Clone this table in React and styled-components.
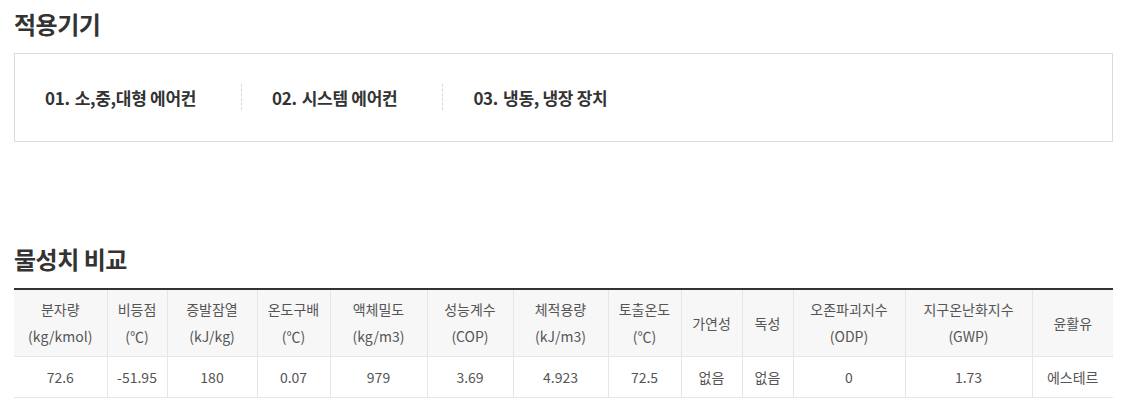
import React from 'react';
import styled, { createGlobalStyle } from 'styled-components';

const GlobalStyle = createGlobalStyle`
  html, body {
    margin: 0;
    padding: 0;
    background: #ffffff;
  }
  body {
    font-family: 'Noto Sans CJK KR', 'Noto Sans', sans-serif;
    color: #333;
  }
`;

const Page = styled.div`
  padding: 0 15px 0 14px;
`;

const Section = styled.section`
  margin-bottom: ${(props) => props.$gap || '0px'};
`;

const Title = styled.h2`
  margin: 0;
  padding-top: 7px;
  height: 46px;
  font-size: 24px;
  font-weight: 700;
  line-height: 34px;
  color: #333;
  letter-spacing: -0.5px;
`;

const DeviceBox = styled.ul`
  display: flex;
  align-items: center;
  margin: 0;
  padding: 30px 0 31px;
  height: 26px;
  list-style: none;
  border: 1px solid #dcdcdc;
`;

const DeviceItem = styled.li`
  display: flex;
  align-items: center;
  height: 26px;
  padding: 0 45px 0 30px;
  border-left: ${(props) => (props.$first ? 'none' : '1px dashed #d8d8d8')};
  font-size: 17px;
  font-weight: 700;
  color: #333;
  letter-spacing: -0.3px;
`;

const Num = styled.span`
  margin-right: 5px;
`;

const Table = styled.table`
  width: 100%;
  border-collapse: collapse;
  table-layout: fixed;
  border-top: 2px solid #333;
  font-size: 14px;
  color: #555;
`;

const Th = styled.th`
  height: 66px;
  padding: 0;
  background: #f7f7f7;
  font-weight: 400;
  line-height: 27px;
  text-align: center;
  border-left: ${(props) => (props.$first ? 'none' : '1px solid #e6e6e6')};
  border-bottom: 1px solid #e6e6e6;
`;

const Td = styled.td`
  height: 40px;
  padding: 0;
  text-align: center;
  border-left: ${(props) => (props.$first ? 'none' : '1px solid #e6e6e6')};
  border-bottom: 1px solid #e6e6e6;
`;

const columns = [
  { w: 93, name: '분자량', unit: '(kg/kmol)', value: '72.6' },
  { w: 60, name: '비등점', unit: '(℃)', value: '-51.95' },
  { w: 90, name: '증발잠열', unit: '(kJ/kg)', value: '180' },
  { w: 73, name: '온도구배', unit: '(℃)', value: '0.07' },
  { w: 97, name: '액체밀도', unit: '(kg/m3)', value: '979' },
  { w: 86, name: '성능계수', unit: '(COP)', value: '3.69' },
  { w: 95, name: '체적용량', unit: '(kJ/m3)', value: '4.923' },
  { w: 73, name: '토출온도', unit: '(℃)', value: '72.5' },
  { w: 61, name: '가연성', value: '없음' },
  { w: 51, name: '독성', value: '없음' },
  { w: 112, name: '오존파괴지수', unit: '(ODP)', value: '0' },
  { w: 127, name: '지구온난화지수', unit: '(GWP)', value: '1.73' },
  { w: 81, name: '윤활유', value: '에스테르' },
];

const devices = [
  { num: '01.', label: '소,중,대형 에어컨' },
  { num: '02.', label: '시스템 에어컨' },
  { num: '03.', label: '냉동, 냉장 장치' },
];

const App = () => {
  return (
    <>
      <GlobalStyle />
      <Page>
        <Section $gap="93px">
          <Title>적용기기</Title>
          <DeviceBox>
            {devices.map((d, i) => (
              <DeviceItem key={d.num} $first={i === 0}>
                <Num>{d.num}</Num>
                {d.label}
              </DeviceItem>
            ))}
          </DeviceBox>
        </Section>

        <Section>
          <Title>물성치 비교</Title>
          <Table>
            <colgroup>
              {columns.map((c) => (
                <col key={c.name} style={{ width: `${c.w}px` }} />
              ))}
            </colgroup>
            <thead>
              <tr>
                {columns.map((c, i) => (
                  <Th key={c.name} $first={i === 0}>
                    {c.name}
                    {c.unit && (
                      <>
                        <br />
                        {c.unit}
                      </>
                    )}
                  </Th>
                ))}
              </tr>
            </thead>
            <tbody>
              <tr>
                {columns.map((c, i) => (
                  <Td key={c.name} $first={i === 0}>
                    {c.value}
                  </Td>
                ))}
              </tr>
            </tbody>
          </Table>
        </Section>
      </Page>
    </>
  );
};

export default App;
